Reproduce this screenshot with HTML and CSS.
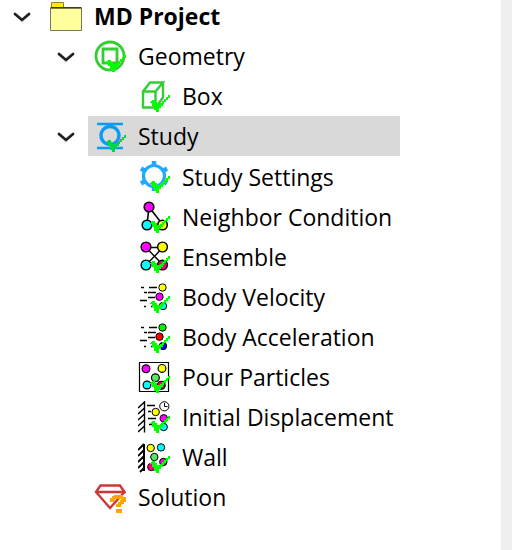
FILE: index.html
```
<!DOCTYPE html>
<html lang="en">
<head>
  <meta charset="UTF-8">
  <meta name="viewport" content="width=device-width, initial-scale=1.0">
  <title>MD Project</title>
  <link rel="stylesheet" href="styles.css">
</head>
<body>
  <!-- Shared symbols -->
  <svg class="defs" aria-hidden="true">
    <symbol id="chevron" viewBox="0 0 18 12">
      <path d="M2 4l7 6 7-6" fill="none" stroke="#1f1f1f" stroke-width="2.8" stroke-linecap="round"/>
    </symbol>
    <symbol id="check" viewBox="0 0 32 32">
      <path d="M14 20h3v2h2v2h3v-1h2v-2h2v-2h2v-2h2v-2h2v3h-2v2h-2v2h-2v2h-1v2h-2v2h-2v4h-3v-2h-2v-4h-2v-3h-2z" shape-rendering="crispEdges"/>
    </symbol>
    <symbol id="motion" viewBox="0 0 32 32">
      <path d="M3 6.5h3M11 6.5h8M6 11.5h3M10 11.5h8M10 16.5h7M2 19.5h7M6 25.5h2M13 25.5h5" stroke="#000" stroke-width="1.4" fill="none"/>
    </symbol>
  </svg>

  <main class="panel">
    <ul class="tree">
      <li>
        <div class="row">
          <button class="toggle" aria-label="Toggle MD Project" aria-expanded="true"><svg><use href="#chevron"/></svg></button>
          <a class="item root" href="#project">
            <svg class="icon" viewBox="0 0 32 32">
              <path d="M1.5 2.5h12v5h-12z" fill="#ffee00" stroke="#8c8420"/>
              <path d="M.5 7.5h31v23H.5z" fill="#ffff9e" stroke="#77775a"/>
              <path d="M1 8h30" stroke="#000"/>
            </svg>
            MD Project
          </a>
        </div>
        <ul>
          <li>
            <div class="row">
              <button class="toggle" aria-label="Toggle Geometry" aria-expanded="true"><svg><use href="#chevron"/></svg></button>
              <a class="item" href="#geometry">
                <svg class="icon" viewBox="0 0 32 32">
                  <g fill="none" stroke="#32cd32" stroke-width="2.8">
                    <circle cx="16" cy="16" r="14"/>
                    <path d="M9 9h14v14H9z"/>
                  </g>
                  <use class="check" href="#check"/>
                </svg>
                Geometry
              </a>
            </div>
            <ul>
              <li class="row leaf">
                <a class="item" href="#box">
                  <svg class="icon" viewBox="0 0 32 32">
                    <path d="M5 11.5h12.5v16H5zL12 2.5h13L17.5 11.5M25 2.5v15l-7.5 10" fill="none" stroke="#32cd32" stroke-width="2.4"/>
                    <use class="check" href="#check"/>
                  </svg>
                  Box
                </a>
              </li>
            </ul>
          </li>
          <li>
            <div class="row">
              <button class="toggle" aria-label="Toggle Study" aria-expanded="true"><svg><use href="#chevron"/></svg></button>
              <a class="item selected" href="#study" aria-current="true">
                <svg class="icon" viewBox="0 0 32 32">
                  <g fill="none" stroke="#0a9bf5">
                    <path d="M3 4h26M3 28h26" stroke-width="2.6"/>
                    <circle cx="16" cy="15.5" r="9" stroke-width="3.4"/>
                  </g>
                  <use class="check dim" href="#check"/>
                </svg>
                Study
              </a>
            </div>
            <ul class="steps">
              <li class="row leaf">
                <a class="item" href="#settings">
                  <svg class="icon" viewBox="0 0 32 32">
                    <g fill="none" stroke="#1eaaff">
                      <path d="M16 0v5M16 25v5M3 7.5l4 2.5M25 20l4 2.5M29 7.5L25 10M7 20l-4 2.5" stroke-width="4.5"/>
                      <circle cx="16" cy="15" r="10.5" stroke-width="3.2"/>
                    </g>
                    <use class="check" href="#check"/>
                  </svg>
                  Study Settings
                </a>
              </li>
              <li class="row leaf">
                <a class="item" href="#neighbor">
                  <svg class="icon" viewBox="0 0 32 32">
                    <g stroke="#000" stroke-width="1.6">
                      <path d="M11 6L9 24h16z" fill="none"/>
                      <circle cx="11" cy="6" r="4.8" fill="#f0f"/>
                      <circle cx="9" cy="24" r="4.8" fill="#0ff"/>
                      <circle cx="24.5" cy="24" r="4.8" fill="#ff0"/>
                    </g>
                    <use class="check" href="#check"/>
                  </svg>
                  Neighbor Condition
                </a>
              </li>
              <li class="row leaf">
                <a class="item" href="#ensemble">
                  <svg class="icon" viewBox="0 0 32 32">
                    <g stroke="#000" stroke-width="1.4">
                      <path d="M8 6.5h17L8 24M25 24L8 6.5" fill="none"/>
                      <circle cx="8" cy="6" r="4.9" fill="#f0f"/>
                      <circle cx="24.5" cy="6" r="4.9" fill="#ff0"/>
                      <circle cx="8" cy="24" r="4.9" fill="#0ff"/>
                      <circle cx="24.5" cy="24" r="4.9" fill="#ff0080"/>
                    </g>
                    <use class="check" href="#check"/>
                  </svg>
                  Ensemble
                </a>
              </li>
              <li class="row leaf">
                <a class="item" href="#velocity">
                  <svg class="icon" viewBox="0 0 32 32">
                    <use href="#motion"/>
                    <g stroke="#000">
                      <circle cx="24.5" cy="6.5" r="3.7" fill="#ff0"/>
                      <circle cx="21.5" cy="15.7" r="3.7" fill="#f0f"/>
                      <circle cx="25" cy="25" r="3.7" fill="#0ff"/>
                    </g>
                    <use class="check" href="#check"/>
                  </svg>
                  Body Velocity
                </a>
              </li>
              <li class="row leaf">
                <a class="item" href="#acceleration">
                  <svg class="icon" viewBox="0 0 32 32">
                    <use href="#motion"/>
                    <g stroke="#000">
                      <circle cx="24.5" cy="6.5" r="3.7" fill="#00f000"/>
                      <circle cx="21.5" cy="15.7" r="3.7" fill="#f00"/>
                      <circle cx="25" cy="25" r="3.7" fill="#00f"/>
                    </g>
                    <use class="check" href="#check"/>
                  </svg>
                  Body Acceleration
                </a>
              </li>
              <li class="row leaf">
                <a class="item" href="#pour">
                  <svg class="icon" viewBox="0 0 32 32">
                    <g stroke="#000" stroke-width="1.2">
                      <path d="M1.5 1.5h29v29h-29z" fill="#fff"/>
                      <circle cx="8" cy="7.7" r="3.9" fill="#f0f"/>
                      <circle cx="24" cy="7.4" r="3.9" fill="#ff0"/>
                      <circle cx="17.4" cy="16.7" r="3.9" fill="#5ce65c"/>
                      <circle cx="9" cy="24" r="3.9" fill="#0ff"/>
                      <circle cx="23.3" cy="24.3" r="3.9" fill="#ff0080"/>
                    </g>
                    <use class="check" href="#check"/>
                  </svg>
                  Pour Particles
                </a>
              </li>
              <li class="row leaf">
                <a class="item" href="#displacement">
                  <svg class="icon" viewBox="0 0 32 32">
                    <g stroke="#000">
                      <path d="M6.5 0v31.5M0 7l6.5-6M0 13l6.5-6M0 19l6.5-6M0 25l6.5-6M0 31l6.5-6" fill="none" stroke-width="1.4"/>
                      <path d="M9 4.5h8M10 10.5h3M10 17.5h8M11 23.5h4" fill="none" stroke-width="1.4"/>
                      <circle cx="26.3" cy="5.3" r="4.6" fill="#fff"/>
                      <path d="M26.5 2v3.5h3" fill="none"/>
                      <circle cx="17.7" cy="11" r="3.7" fill="#ff0"/>
                      <circle cx="25.7" cy="17.3" r="3.7" fill="#f0f"/>
                      <circle cx="25.7" cy="26" r="3.7" fill="#0ff"/>
                    </g>
                    <use class="check" href="#check"/>
                  </svg>
                  Initial Displacement
                </a>
              </li>
              <li class="row leaf">
                <a class="item" href="#wall">
                  <svg class="icon" viewBox="0 0 32 32">
                    <g stroke="#000">
                      <path d="M6 3v27" stroke-width="2"/>
                      <path d="M0 9l6-6M0 15l6-6M0 21l6-6M0 27l6-6M2 31l4-4" fill="none" stroke-width="1.8"/>
                      <circle cx="12.7" cy="7" r="3.7" fill="#ff0"/>
                      <circle cx="23" cy="6.4" r="3.7" fill="#0ff"/>
                      <circle cx="16.3" cy="16" r="3.7" fill="#5ce65c"/>
                      <circle cx="25.3" cy="21" r="3.7" fill="#f0f"/>
                      <circle cx="13.3" cy="26" r="3.7" fill="#ff0080"/>
                    </g>
                    <use class="check" href="#check"/>
                  </svg>
                  Wall
                </a>
              </li>
            </ul>
          </li>
          <li class="row leaf">
            <a class="item" href="#solution">
              <svg class="icon" viewBox="0 0 32 32">
                <path d="M2 11h28.5L26 4.5H6.5L2 11l14 16 14.5-16" fill="none" stroke="#cd3737" stroke-width="2.4"/>
                <path d="M16 17h2v-2h2v-1h9v2h3v5h-2v2h-2v1h-1v2h-5v-3h2v-2h2v-2h1v-1h-6v2h-1v1h-4zM22 28h6v4h-6z" fill="#ffa500" shape-rendering="crispEdges"/>
              </svg>
              Solution
            </a>
          </li>
        </ul>
      </li>
    </ul>
  </main>
  <div class="gutter"></div>
</body>
</html>
```

FILE: styles.css
```
body {
  margin: 0;
  display: flex;
  min-height: 100vh;
  background-color: #ffffff;
  color: #000000;
  font-family: "Open Sans", "Segoe UI", sans-serif;
  font-size: 23px;
  overflow: hidden;
}
.defs {
  display: none;
}
.panel {
  flex: 1;
  min-width: 0;
}
.gutter {
  width: 11px;
  background-color: #efefef;
}

/* Tree */
.tree {
  width: max-content;
  margin-top: -4px;
}
ul {
  list-style: none;
  margin: 0;
  padding: 0;
}
ul ul {
  padding-left: 44px;
}
.steps {
  padding-top: 1px;
}
.row {
  display: flex;
  height: 40px;
}
.leaf {
  padding-left: 44px;
}
.toggle {
  width: 44px;
  padding: 0;
  border: none;
  background: none;
  cursor: pointer;
}
.toggle svg {
  display: block;
  width: 18px;
  height: 12px;
  margin: 0 auto;
}
.item {
  flex: 1;
  display: flex;
  align-items: center;
  gap: 12px;
  padding: 0 7px 0 6px;
  color: inherit;
  text-decoration: none;
  white-space: nowrap;
}
.root {
  font-weight: bold;
}
.selected {
  background-color: #d9d9d9;
}

/* Icons */
.icon {
  flex: none;
  width: 32px;
  height: 32px;
}
.check {
  fill: #00ff00;
}
.dim {
  fill: #00d447;
}
```
